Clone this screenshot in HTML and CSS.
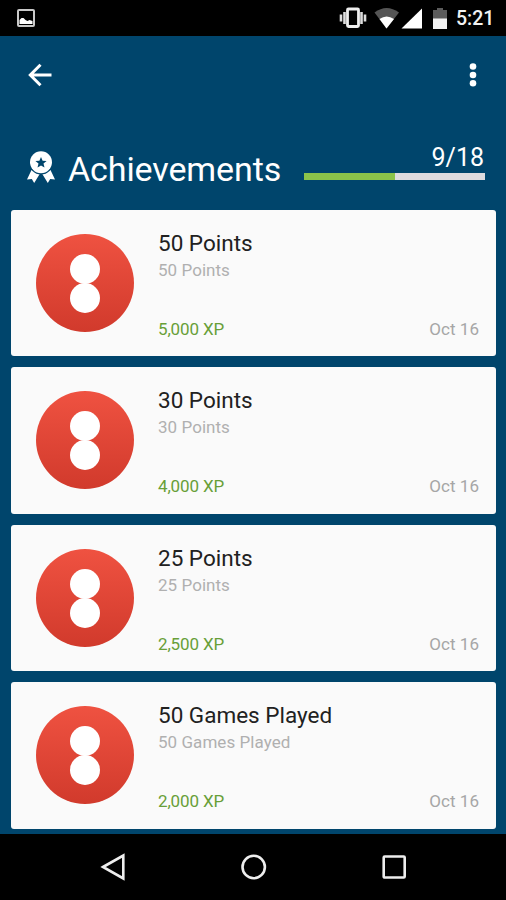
FILE: index.html
```html
<!DOCTYPE html>
<html lang="en">
<head>
<meta charset="utf-8">
<title>Achievements</title>
<link rel="stylesheet" href="styles.css">
</head>
<body>
<div class="status">
  <svg class="picture" width="18" height="18" viewBox="0 0 18 18"><rect x="1" y="1" width="16" height="16" rx="1" fill="none" stroke="#c9c9c9" stroke-width="2"/><path d="M2.500 15v-4l2-2h2l2 2 2 1 2-1 3 1v3z" fill="#fff"/></svg>
  <svg class="signals" width="110" height="22" viewBox="339 7 110 22">
    <rect x="347.500" y="9" width="11" height="17.500" rx="1" fill="none" stroke="#eee" stroke-width="2.800"/>
    <path d="M344.500 12v12M361.500 12v12M341 14.500v7M365 14.500v7" stroke="#ddd" stroke-width="2.600"/>
    <path d="M374.500 12.500Q386.500 3.500 399 12.500L386.500 28.500z" fill="#555"/>
    <path d="M379.500 19Q386.500 14 394 19L386.500 28.500z" fill="#fff"/>
    <path d="M422 8.500V28.500H401.500z" fill="#fff"/>
    <path d="M433 10h4V8h6v2h4v9h-14z" fill="#5c5c5c"/>
    <path d="M433 18.500h14V29h-14z" fill="#f2f2f2"/>
  </svg>
  <span class="clock">5:21</span>
</div>
<main class="app">
  <div class="toolbar">
    <svg width="24" height="24" viewBox="0 0 24 24"><path d="M23.500 12H2.500M12.500 1.800L2.300 12l10.200 10.200" fill="none" stroke="#fff" stroke-width="3"/></svg>
    <svg width="8" height="26" viewBox="0 0 8 26" fill="#fff"><circle cx="4" cy="4.500" r="3.300"/><circle cx="4" cy="13" r="3.300"/><circle cx="4" cy="21.300" r="3.300"/></svg>
  </div>
  <div class="heading">
    <svg class="medal" width="28" height="33" viewBox="0 0 28 33"><path d="M4.500 19L0 28.500l4.800-.5 2.400 4L13 22.500zM23.500 19l4.500 9.500-4.800-.5-2.400 4L15 22.500z" fill="#fff"/><circle cx="14" cy="11.500" r="12" fill="#00456c"/><circle cx="14" cy="11.200" r="11" fill="#fff"/><path d="M14 6l1.600 3.700 4 .3-3.100 2.600 1 4-3.500-2.200-3.500 2.200 1-4L8.400 10l4-.3z" fill="#00456c"/></svg>
    <h1>Achievements</h1>
    <div class="progress"><span class="count">9/18</span><div class="track"><div class="fill"></div></div></div>
  </div>
  <section class="list">
    <article class="card"><div class="badge"><i></i><i></i></div><div class="info"><h2>50 Points</h2><p>50 Points</p><div class="meta"><span class="xp">5,000 XP</span><time>Oct 16</time></div></div></article>
    <article class="card"><div class="badge"><i></i><i></i></div><div class="info"><h2>30 Points</h2><p>30 Points</p><div class="meta"><span class="xp">4,000 XP</span><time>Oct 16</time></div></div></article>
    <article class="card"><div class="badge"><i></i><i></i></div><div class="info"><h2>25 Points</h2><p>25 Points</p><div class="meta"><span class="xp">2,500 XP</span><time>Oct 16</time></div></div></article>
    <article class="card"><div class="badge"><i></i><i></i></div><div class="info"><h2>50 Games Played</h2><p>50 Games Played</p><div class="meta"><span class="xp">2,000 XP</span><time>Oct 16</time></div></div></article>
  </section>
</main>
<nav class="navbar">
  <svg width="28" height="30" viewBox="0 0 28 30"><path d="M4 15L24.300 3.500v23z"/></svg>
  <svg width="28" height="30" viewBox="0 0 28 30"><circle cx="13.700" cy="15" r="11.200"/></svg>
  <svg width="28" height="30" viewBox="0 0 28 30"><rect x="3.700" y="4.500" width="21" height="21" rx="1"/></svg>
</nav>
</body>
</html>
```
FILE: styles.css
```css
* { box-sizing: border-box; margin: 0; padding: 0; }
body { width: 506px; height: 900px; overflow: hidden; background: #000; font-family: Roboto, sans-serif; display: flex; flex-direction: column; }
svg { display: block; flex: none; }
.status { height: 36px; display: flex; align-items: center; padding: 0 12px 0 17px; color: #f2f2f2; }
.signals { margin-left: auto; }
.clock { width: 38px; margin-left: 7px; font-size: 19.5px; font-weight: 500; line-height: 36px; padding-top: 2px; white-space: nowrap; }
.app { height: 798px; background: #00456c; overflow: hidden; }
.toolbar { height: 78px; display: flex; justify-content: space-between; align-items: center; padding: 0 29px 0 28px; }
.heading { height: 95.5px; display: flex; align-items: flex-start; padding: 0 21px 0 27px; color: #fff; }
.medal { margin-top: 37px; }
h1 { width: 236px; padding-left: 13px; margin-top: 35px; font-size: 34px; line-height: 40px; font-weight: 400; letter-spacing: -.1px; }
.progress { flex: 1; margin-left: 13px; margin-top: 29px; text-align: right; }
.count { display: block; font-size: 25px; line-height: 30px; height: 30px; letter-spacing: 0; padding-right: 1px; }
.track { height: 7px; background: #dedbde; }
.fill { width: 50%; height: 7px; background: #8bc34a; }
.list { display: grid; grid-auto-rows: 146.5px; gap: 11px; padding: 0 10px 0 11px; }
.card { display: flex; background: #fafafa; border-radius: 3px; padding: 0 17px 0 25px; }
.badge { width: 98px; height: 98px; margin: 24px 24px 0 0; flex: none; border-radius: 50%; background: linear-gradient(#ef5241, #d13a2c); display: flex; flex-direction: column; align-items: center; padding-top: 20px; }
.badge i { width: 30px; height: 30px; margin-bottom: -1px; border-radius: 50%; background: #fff; }
.info { flex: 1; padding-top: 19px; }
h2 { font-size: 22.5px; line-height: 28px; font-weight: 400; color: #212121; letter-spacing: 0; }
p { font-size: 17px; line-height: 22px; margin-top: 2px; color: #b0b0b0; letter-spacing: .05px; }
.meta { display: flex; justify-content: space-between; margin-top: 37px; font-size: 17px; line-height: 22px; }
.xp { color: #689f38; letter-spacing: -.15px; }
time { color: #a6a6a6; letter-spacing: .05px; }
.navbar { height: 66px; display: flex; justify-content: space-between; align-items: center; padding: 0 98px 0 99px; }
.navbar svg { fill: none; stroke: #eee; stroke-width: 2.6; }
```
